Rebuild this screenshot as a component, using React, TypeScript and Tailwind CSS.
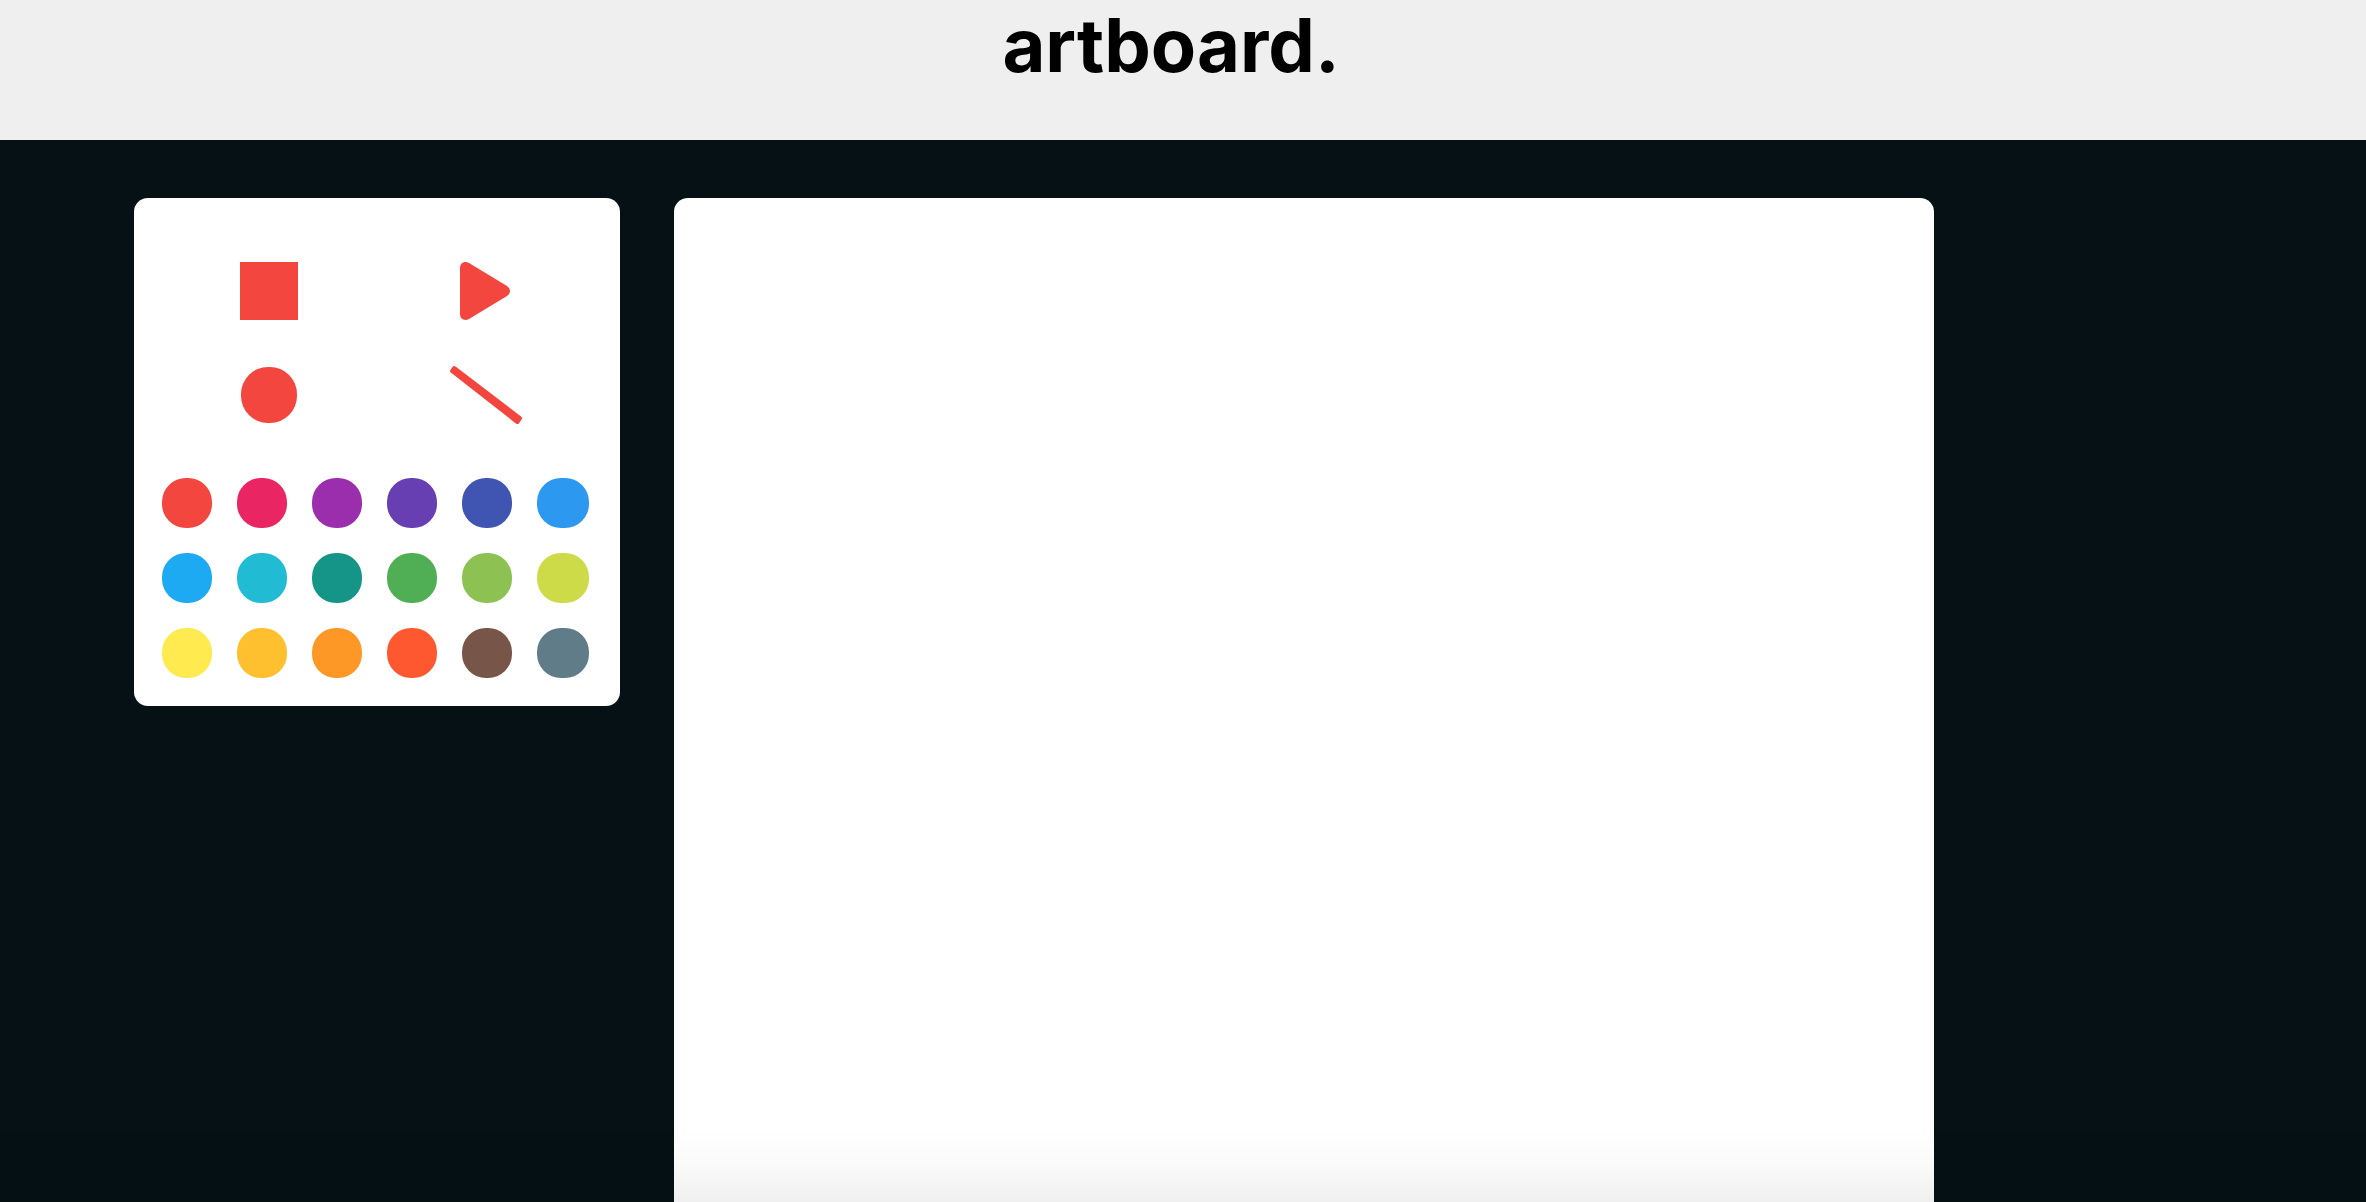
const swatches = [
  { name: "Red", fill: "bg-[#f3463e]" },
  { name: "Pink", fill: "bg-[#e92564]" },
  { name: "Purple", fill: "bg-[#9b2eac]" },
  { name: "Deep purple", fill: "bg-[#673fb2]" },
  { name: "Indigo", fill: "bg-[#4054b2]" },
  { name: "Blue", fill: "bg-[#2d98f0]" },
  { name: "Light blue", fill: "bg-[#1eaaf2]" },
  { name: "Cyan", fill: "bg-[#21bcd3]" },
  { name: "Teal", fill: "bg-[#159588]" },
  { name: "Green", fill: "bg-[#50ae55]" },
  { name: "Light green", fill: "bg-[#8dc252]" },
  { name: "Lime", fill: "bg-[#cddb48]" },
  { name: "Yellow", fill: "bg-[#ffea4f]" },
  { name: "Amber", fill: "bg-[#fec02f]" },
  { name: "Orange", fill: "bg-[#fd9827]" },
  { name: "Deep orange", fill: "bg-[#fe5830]" },
  { name: "Brown", fill: "bg-[#775549]" },
  { name: "Blue grey", fill: "bg-[#607c89]" },
];

function Shapes() {
  return (
    <div className="grid grid-cols-2 justify-items-center gap-y-[46px] px-[26px] text-[#f3463e]">
      <button type="button" aria-label="Square" className="size-[58px] bg-current" />
      <button type="button" aria-label="Triangle" className="h-[58px] w-[52px]">
        <svg viewBox="0 0 52 58" className="size-full" fill="currentColor" aria-hidden="true">
          <path d="M0 6C0 1 4.500-1.500 9 1L47 24Q50 26 50 29Q50 32 47 34L9 57C4.500 59.500 0 57 0 52Z" />
        </svg>
      </button>
      <button type="button" aria-label="Circle" className="size-14 self-center rounded-[27px] bg-current" />
      <button type="button" aria-label="Line" className="h-[58px] w-[72px]">
        <svg viewBox="0 0 72 58" className="size-full" fill="currentColor" aria-hidden="true">
          <path d="M.8 6.600Q-.5 5.500 .3 4.200L2.600.8Q3.700-.5 5.500 .5L71 50.400Q72.500 51.700 71.700 53.200L69.600 56.600Q68.300 58.700 66.500 57.900Z" />
        </svg>
      </button>
    </div>
  );
}

function Palette() {
  return (
    <div className="grid grid-cols-[repeat(5,50px)_52px] gap-[25px] px-7">
      {swatches.map((s) => (
        <button key={s.name} type="button" aria-label={s.name} className={`h-[50px] rounded-3xl ${s.fill}`} />
      ))}
    </div>
  );
}

export default function App() {
  return (
    <div className="flex h-screen flex-col overflow-hidden bg-[#061115] font-['Inter',sans-serif]">
      <header className="flex h-[140px] shrink-0 justify-center bg-[#efefef] pr-6">
        <h1 className="text-[74px] leading-[90px] font-bold text-black">artboard.</h1>
      </header>
      <main className="flex flex-1 items-start gap-[54px] pt-[58px] pr-[432px] pl-[134px]">
        <aside className="flex w-[486px] shrink-0 flex-col gap-[54px] rounded-[14px] bg-white pt-16 pb-7">
          <Shapes />
          <Palette />
        </aside>
        <section aria-label="Canvas" className="min-w-0 flex-1 self-stretch rounded-t-[14px] bg-white" />
      </main>
      <div className="pointer-events-none fixed inset-x-0 bottom-0 h-[72px] bg-linear-to-b from-transparent via-black/2 to-black/6" />
    </div>
  );
}
